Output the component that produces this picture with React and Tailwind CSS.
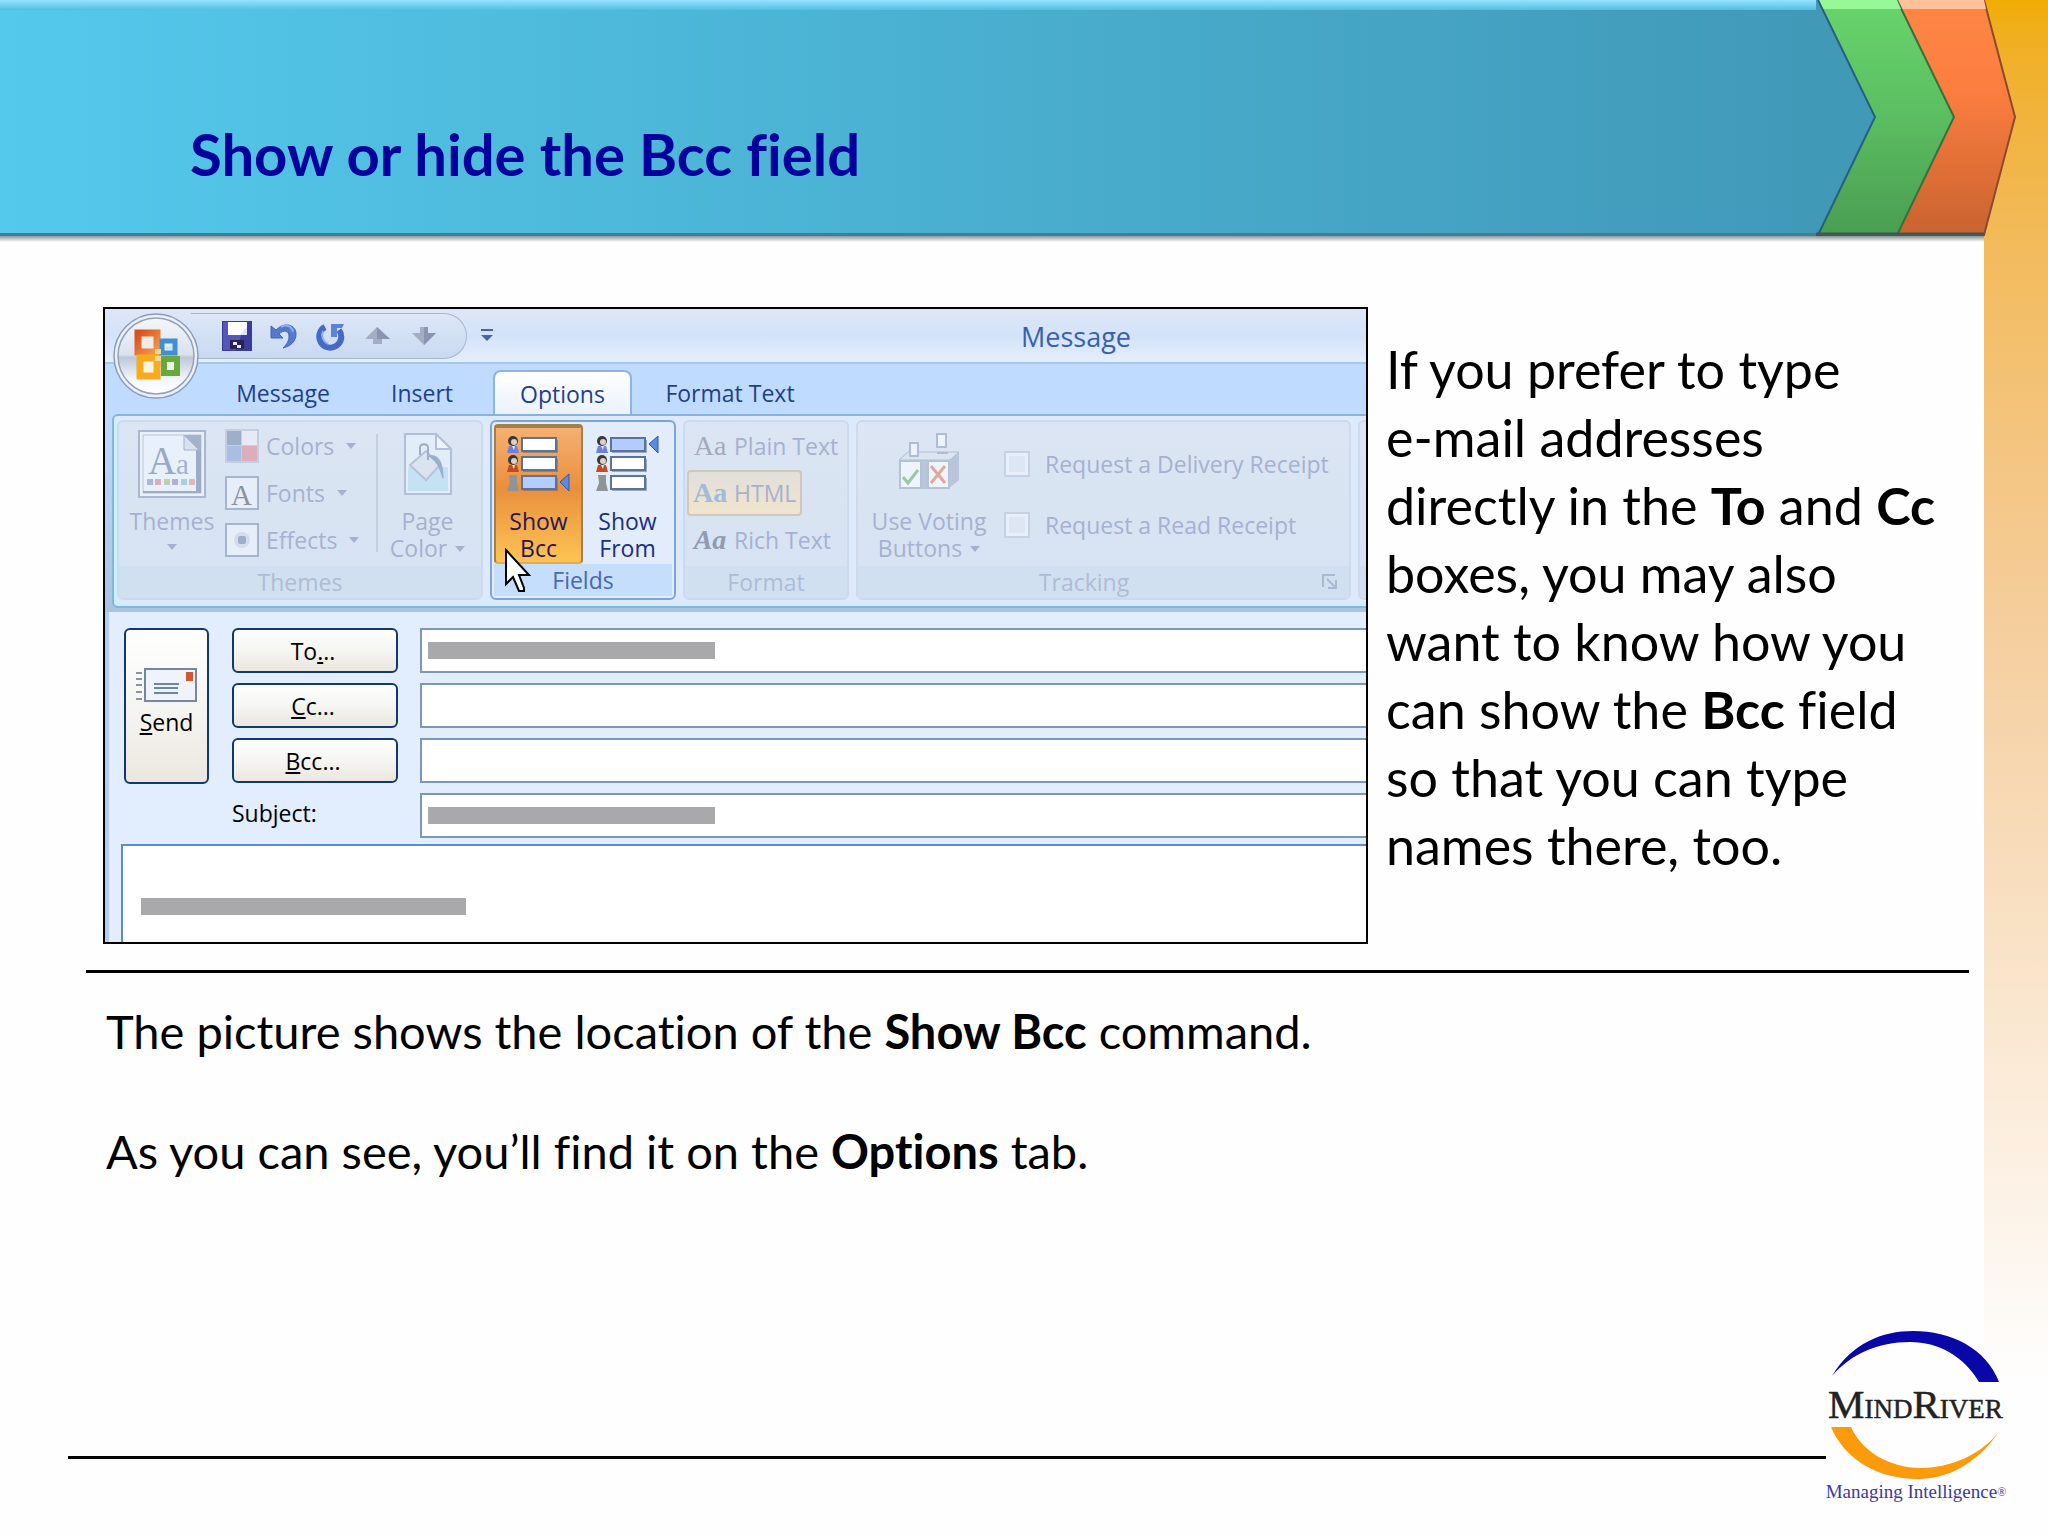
import React from 'react';
import clsx from 'clsx';

const Caret = ({ className }) => (
  <svg viewBox="0 0 10 6" className={clsx('w-[10px] h-[6px] shrink-0', className)}>
    <path d="M0 0H10L5 6Z" fill="currentColor" />
  </svg>
);

const HeaderArrows = () => (
  <svg viewBox="0 0 232 242" className="block w-[232px] h-[242px] shrink-0">
    <defs>
      <linearGradient id="green" x1="0" y1="0" x2="0" y2="1">
        <stop offset="0" stopColor="#68d56c" />
        <stop offset="0.5" stopColor="#5bbd61" />
        <stop offset="1" stopColor="#4a9d51" />
      </linearGradient>
      <linearGradient id="orange" x1="0" y1="0" x2="0" y2="1">
        <stop offset="0" stopColor="#ff8744" />
        <stop offset="0.4" stopColor="#fb7d3f" />
        <stop offset="1" stopColor="#c8632f" />
      </linearGradient>
      <linearGradient id="drop" x1="0" y1="0" x2="0" y2="1">
        <stop offset="0" stopColor="#5f6b70" />
        <stop offset="1" stopColor="#ffffff" />
      </linearGradient>
    </defs>
    <rect x="0" y="234" width="168" height="8" fill="url(#drop)" />
    <path d="M80 0H168L199 117L168 235H80Z" fill="url(#orange)" stroke="#8a4a30" strokeWidth="2" />
    <path d="M80 0H168L170 9H84Z" fill="#ffc19a" />
    <path d="M0 0H81L138 117L81 235H0Z" fill="url(#green)" stroke="#35713c" strokeWidth="2" />
    <path d="M2 0H81L85 9H2Z" fill="#97f898" />
    <path d="M-2 0H2L59 117L2 235H-2Z" fill="#4199b8" />
    <path d="M2 0L59 117L2 235" fill="none" stroke="#25607e" strokeWidth="2" />
    <path d="M0 234H168" stroke="#3d5a50" strokeWidth="3" />
  </svg>
);

const Header = () => (
  <header className="relative flex">
    <div className="flex-1 h-[242px] flex flex-col">
      <div className="h-[236px] border-b-[3px] border-[#3c7f97] bg-linear-to-r from-[#54c9ec] to-[#4199b8] flex flex-col">
        <div className="h-[10px] bg-linear-to-b from-[#93e3ff] to-[#54bfe0]" />
        <h1 className="pl-[190px] pt-[108px] text-[58px] leading-[72px] font-bold text-[#00009c]">
          Show or hide the Bcc field
        </h1>
      </div>
      <div className="h-[6px] bg-linear-to-b from-[#8d999e] to-white" />
    </div>
    <HeaderArrows />
  </header>
);

const OfficeOrb = () => (
  <svg viewBox="0 0 88 88" className="absolute left-[7px] top-[3px] w-[88px] h-[88px]">
    <defs>
      <linearGradient id="orb" x1="0" y1="0" x2="0" y2="1">
        <stop offset="0" stopColor="#f4f7fb" />
        <stop offset="0.48" stopColor="#dbe2ee" />
        <stop offset="0.52" stopColor="#bdc8da" />
        <stop offset="0.8" stopColor="#f3f6fb" />
        <stop offset="1" stopColor="#ffffff" />
      </linearGradient>
      <linearGradient id="orbRed" x1="0" y1="0" x2="1" y2="1">
        <stop offset="0" stopColor="#d9501c" />
        <stop offset="1" stopColor="#f59a4c" />
      </linearGradient>
    </defs>
    <circle cx="44" cy="44" r="42" fill="#eaf1fb" stroke="#8c9cb8" strokeWidth="1.5" />
    <circle cx="44" cy="44" r="38" fill="url(#orb)" stroke="#94a2bb" strokeWidth="1.5" />
    <rect x="26" y="21" width="19" height="19" fill="#f2ece8" stroke="url(#orbRed)" strokeWidth="7" />
    <rect x="50" y="29" width="13" height="12" fill="#e4eef8" stroke="#3f8fd2" strokeWidth="5" />
    <rect x="28" y="46" width="17" height="18" fill="#fbf4e2" stroke="#f8ab1c" strokeWidth="7" />
    <rect x="52" y="47" width="13" height="14" fill="#eef5e8" stroke="#69a83c" strokeWidth="6" />
    <path d="M43 37h6v5h-6zM43 44h6v5h-6z" fill="#f3d69a" />
    <path d="M54 36h6" stroke="#cfe3f6" strokeWidth="3" />
  </svg>
);

const QuickAccess = () => (
  <div className="h-[46px] ml-[86px] w-[276px] rounded-r-full border border-[#a5b5d2] border-l-0 bg-linear-to-b from-[#dde8f8] to-[#c9d9f0] flex items-center gap-[17px] pl-[31px]">
    <button type="button" aria-label="Save">
      <svg viewBox="0 0 30 30" className="block w-[30px] h-[30px]">
        <rect x="0.5" y="0.5" width="29" height="29" fill="#5456b8" stroke="#3a3a96" />
        <path d="M24 1H29V29H14Z" fill="#3c3c9c" />
        <path d="M6 1H25V14H6Z" fill="#ffffff" />
        <path d="M18 14L25 6V14Z" fill="#dfe3ee" />
        <rect x="8" y="19" width="14" height="9" fill="#25254f" />
        <path d="M11 21h4v3h-4zM15 24h4v3h-4z" fill="#e7e7f4" />
      </svg>
    </button>
    <button type="button" aria-label="Undo">
      <svg viewBox="0 0 30 30" className="block w-[30px] h-[30px]">
        <path d="M2 5L2 17L14 17L10 13C15 8 20 10 20 15C20 20 18 23 14 27C22 25 27 20 27 13C27 4 16 0 7 9Z" fill="#5479cf" stroke="#3f62b8" strokeWidth="1" />
        <path d="M12 6C17 3 23 5 24 11" fill="none" stroke="#8fb0ee" strokeWidth="2" />
      </svg>
    </button>
    <button type="button" aria-label="Redo">
      <svg viewBox="0 0 30 30" className="block w-[30px] h-[30px]">
        <path d="M9 6A11 11 0 1 0 23 9" fill="none" stroke="#4668c6" strokeWidth="6" />
        <path d="M7 10A10 10 0 0 0 12 23" fill="none" stroke="#8fb0ee" strokeWidth="2" />
        <path d="M15 3H28L26 7L21 7L21 16H15Z" fill="#5b84d8" />
      </svg>
    </button>
    <button type="button" aria-label="Previous item">
      <svg viewBox="0 0 30 30" className="block w-[30px] h-[30px]">
        <path d="M14 6L27 18H19V23H10V18H2Z" fill="#a3aec4" />
        <path d="M14 6L27 18H14Z" fill="#8995b0" />
      </svg>
    </button>
    <button type="button" aria-label="Next item">
      <svg viewBox="0 0 30 30" className="block w-[30px] h-[30px]">
        <path d="M10 6H18V12H26L14 24L2 12H10Z" fill="#a3aec4" />
        <path d="M14 24L26 12H18V6H14Z" fill="#8995b0" />
      </svg>
    </button>
  </div>
);

const TitleBar = () => (
  <div className="h-[55px] flex items-start pt-1 border-b-2 border-[#a3c8ee] bg-linear-to-b from-[#dce8f8] via-[#d3e3f8] to-[#e4effd]">
    <QuickAccess />
    <button type="button" aria-label="Customize toolbar" className="ml-[14px] mt-[16px] text-[#4a62a8]">
      <svg viewBox="0 0 12 13" className="block w-[12px] h-[13px]">
        <path d="M0 1H12" stroke="currentColor" strokeWidth="2" />
        <path d="M0 6H12L6 12Z" fill="currentColor" />
      </svg>
    </button>
    <p className="flex-1 pl-[528px] pt-[6px] text-[27px] leading-[36px] text-[#3a5fb0]">Message</p>
  </div>
);

const tabs = [
  { name: 'Message', className: 'ml-[110px] w-[136px]' },
  { name: 'Insert', className: 'w-[142px]' },
  { name: 'Options', className: 'w-[139px] rounded-t-lg border-2 border-b-0 border-[#8fb4e4] bg-linear-to-b from-white to-[#eaf2fc]' },
  { name: 'Format Text', className: 'w-[196px]' },
];

const Tabs = () => (
  <nav className="h-[50px] flex items-end bg-[#bfdbff]" role="tablist">
    {tabs.map((tab) => (
      <button
        key={tab.name}
        type="button"
        role="tab"
        aria-selected={tab.name === 'Options'}
        className={clsx('h-[44px] pt-[2px] text-[23px] leading-[36px] text-[#1f3f8c]', tab.className)}
      >
        {tab.name}
      </button>
    ))}
  </nav>
);

const Group = ({ title, className, children, launcher }) => (
  <section className={clsx('shrink-0 h-[180px] flex flex-col rounded-md border-2 border-[#ccdaeb] bg-linear-to-b from-[#dbe5f3] to-[#d6e3f2] text-[#a6b1d0]', className)}>
    <div className="flex-1 flex">{children}</div>
    <div className="h-[32px] flex items-center justify-center bg-[#d1e0f0] text-[#afbcd6]">
      <h2 className={clsx('text-[23px] leading-[32px]', launcher && 'flex-1 pr-[12px] text-center')}>{title}</h2>
      {launcher && (
        <svg viewBox="0 0 16 16" className="w-4 h-4 mr-[11px]">
          <path d="M1 13V1H13" fill="none" stroke="#a9b9d2" strokeWidth="2" />
          <path d="M5 5L13 13M14 6V14H6" fill="none" stroke="#a9b9d2" strokeWidth="2" />
        </svg>
      )}
    </div>
  </section>
);

const ThemesGroup = () => (
  <Group title="Themes" className="w-[366px]">
    <button type="button" className="w-[106px] pt-[8px] flex flex-col items-center text-[23px] leading-[28px]">
      <svg viewBox="0 0 68 68" className="w-[68px] h-[68px] mb-[9px]">
        <rect x="1" y="1" width="66" height="66" fill="#e9f0fa" stroke="#a9b8d0" strokeWidth="2" />
        <path d="M5 5H63V63H5Z" fill="#e7f0fb" stroke="#b8c6da" strokeWidth="1" />
        <path d="M58 18H63V63H5V61H58Z" fill="#9eadc6" />
        <path d="M46 5H63V20H46Z" fill="#a5b3ca" />
        <path d="M46 5V20H61Z" fill="#d7e1ef" stroke="#a5b3ca" />
        <text x="10" y="44" fontSize="39" fontFamily="Liberation Serif" fill="#98a9c6">A</text>
        <text x="38" y="44" fontSize="29" fontFamily="Liberation Serif" fill="#a3b2cb">a</text>
        <path d="M9 49h6v6h-6z" fill="#b0b4dc" />
        <path d="M17 49h6v6h-6z" fill="#d7afbf" />
        <path d="M26 49h6v6h-6z" fill="#bfd0b0" />
        <path d="M34 49h6v6h-6z" fill="#b4b2d4" />
        <path d="M43 49h6v6h-6z" fill="#a7d0e2" />
        <path d="M51 49h6v6h-6z" fill="#e2b4c0" />
      </svg>
      Themes
      <Caret className="mt-[9px]" />
    </button>
    <div className="pt-[7px] w-[142px] flex flex-col gap-[13px] text-[23px] leading-[34px]">
      <button type="button" className="flex items-center gap-[7px]">
        <svg viewBox="0 0 34 34" className="w-[34px] h-[34px]">
          <path d="M0 0H34V34H0Z" fill="#c3cfe0" />
          <path d="M2 2H16V16H2Z" fill="#9fafca" />
          <path d="M17 2H32V16H17Z" fill="#e6ebf3" />
          <path d="M2 17H16V32H2Z" fill="#a9bfe2" />
          <path d="M17 17H32V32H17Z" fill="#dcaebb" />
        </svg>
        Colors
        <Caret className="ml-[5px]" />
      </button>
      <button type="button" className="flex items-center gap-[7px]">
        <svg viewBox="0 0 34 34" className="w-[34px] h-[34px]">
          <rect x="1" y="1" width="32" height="32" fill="#e6eef9" stroke="#a5b5cf" strokeWidth="2" />
          <text x="6" y="29" fontSize="29" fontFamily="Liberation Serif" fill="#8d9199">A</text>
        </svg>
        Fonts
        <Caret className="ml-[5px]" />
      </button>
      <button type="button" className="flex items-center gap-[7px]">
        <svg viewBox="0 0 34 34" className="w-[34px] h-[34px]">
          <rect x="1" y="1" width="32" height="32" fill="#e6eef9" stroke="#a5b5cf" strokeWidth="2" />
          <circle cx="17" cy="17" r="8" fill="#d3ddec" />
          <rect x="13" y="13" width="8" height="8" rx="2" fill="#9dadca" />
        </svg>
        Effects
        <Caret className="ml-[5px]" />
      </button>
    </div>
    <div className="mt-3 w-[2px] h-[118px] ml-[9px] bg-[#c3d0e2]" />
    <button type="button" className="flex-1 pt-[11px] pr-1 flex flex-col items-center text-[23px] leading-[27px]">
      <svg viewBox="0 0 48 62" className="w-[48px] h-[62px] mb-[13px]">
        <path d="M1 1H32L47 16V61H1Z" fill="#e3edf9" stroke="#b1c0d8" strokeWidth="2" />
        <path d="M4 34H44V58H4Z" fill="#c5e2f4" />
        <path d="M32 1V16H47Z" fill="#eef4fb" stroke="#b1c0d8" strokeWidth="2" />
        <path d="M6 32L22 18L36 32L22 47Z" fill="#dbe3f0" stroke="#b5c2d7" strokeWidth="2" />
        <path d="M16 22V15C16 10 24 10 24 15V27" fill="none" stroke="#9fadc6" strokeWidth="2" />
        <path d="M25 23C33 21 39 27 39 45C36 38 36 31 25 23Z" fill="#9daec9" stroke="#9daec9" strokeWidth="1" />
      </svg>
      <span>Page</span>
      <span className="flex items-center gap-2">Color <Caret /></span>
    </button>
  </Group>
);

// Three address rows, the highlighted one carries the blue marker.
const FieldRows = ({ active }) => (
  <svg viewBox="0 0 64 58" className="w-[64px] h-[58px]">
    {[0, 1, 2].map((row) => {
      const y = row * 19 + 2;
      return (
        <g key={row}>
          {row === 2 ? (
            <path d={`M2 ${y}H10V${y + 8}L12 ${y + 16}H0L3 ${y + 8}Z`} fill="#8f9499" />
          ) : (
            <>
              <circle cx="6" cy={y + 4} r="5" fill="#39393d" />
              <circle cx="7" cy={y + 5} r="3" fill="#d9d2cb" />
              <path d={`M0 ${y + 16}L2 ${y + 9}H10L12 ${y + 16}Z`} fill={row === 0 ? '#6f7fe0' : '#c24a1e'} />
              <path d={`M5 ${y + 9}H8L7 ${y + 13}Z`} fill="#ece6e2" />
            </>
          )}
          <rect x="16" y={y + 3} width="35" height="13" fill="#56617c" opacity="0.5" />
          <rect x="15" y={y + 1} width="34" height="13" fill={row === active ? '#b4ccff' : '#ffffff'} stroke="#5a7399" strokeWidth="2" />
          {row === active && <path d={`M62 ${y - 1}V${y + 16}L53 ${y + 7}Z`} fill="#5b8ae0" stroke="#2e55b4" />}
        </g>
      );
    })}
  </svg>
);

const Cursor = () => (
  <svg viewBox="0 0 28 48" className="absolute left-[12px] top-[126px] w-[28px] h-[48px]">
    <path d="M2 2V36L9 29L15 43H20V40L15 27H25Z" fill="#ffffff" stroke="#000000" strokeWidth="2" />
  </svg>
);

const FieldsGroup = () => (
  <section className="relative shrink-0 w-[186px] h-[180px] flex flex-col rounded-md border-2 border-[#7fa6d8] bg-[#e2ecfa] p-[2px] text-[#1c2f80]">
    <div className="flex-1 flex text-[23px] leading-[27px]">
      <button type="button" className="w-[89px] pt-[7px] flex flex-col items-center rounded-sm border-2 border-t-4 border-[#a08050] border-b-[#e8a850] bg-linear-to-b from-[#f6b070] via-[#e98f3c] via-45% to-[#fcc454] text-[#2a1458]">
        <FieldRows active={2} />
        <span className="mt-[15px]">Show</span>
        <span>Bcc</span>
      </button>
      <button type="button" className="flex-1 pt-[11px] flex flex-col items-center">
        <FieldRows active={0} />
        <span className="mt-[15px]">Show</span>
        <span>From</span>
      </button>
    </div>
    <h2 className="h-[32px] bg-[#c4defc] text-center text-[23px] leading-[32px] text-[#4868b0]">Fields</h2>
    <Cursor />
  </section>
);

const formats = [
  { name: 'Plain Text', glyph: 'text-[#a3abbc]', className: 'border-transparent' },
  { name: 'HTML', glyph: 'font-bold text-[#a0bbdc]', className: 'border-[#cfc8bb] bg-linear-to-b from-[#e2e0dc] to-[#f0e4cc]' },
  { name: 'Rich Text', glyph: 'font-bold italic text-[#8f9bb0]', className: 'border-transparent' },
];

const FormatGroup = () => (
  <Group title="Format" className="w-[166px]">
    <div className="pt-[1px] pl-[2px] flex flex-col items-start gap-[1px]">
      {formats.map((format) => (
        <button
          key={format.name}
          type="button"
          className={clsx('h-[46px] pl-1 pr-1 flex items-center gap-[7px] rounded-sm border-2 whitespace-nowrap text-[23px]', format.className)}
        >
          <span className={clsx('w-[34px] font-["Liberation_Serif",serif] text-[28px]', format.glyph)}>Aa</span>
          {format.name}
        </button>
      ))}
    </div>
  </Group>
);

const ReceiptOption = ({ id, children }) => (
  <div className="flex items-center gap-[15px]">
    <input id={id} type="checkbox" className="appearance-none w-[26px] h-[26px] border-2 border-[#c5d2e4] bg-[#dde7f4] shadow-[inset_0_0_0_3px_#e8eff9]" />
    <label htmlFor={id} className="text-[23px] leading-[30px] whitespace-nowrap">{children}</label>
  </div>
);

const TrackingGroup = () => (
  <Group title="Tracking" className="w-[495px]" launcher>
    <button type="button" className="w-[146px] pt-[11px] pr-1 flex flex-col items-center text-[23px] leading-[27px]">
      <svg viewBox="0 0 62 58" className="w-[62px] h-[58px] mb-[17px]">
        <path d="M1 27L10 19H61V47L50 56H1Z" fill="#b9c6d9" />
        <path d="M1 27L10 19H61L52 27Z" fill="#dbe4f0" stroke="#b0bed2" />
        <path d="M2 28H23V55H2ZM30 28H51V55H30Z" fill="#eef4fb" stroke="#b4c2d6" strokeWidth="2" />
        <path d="M12 10H20V23H12ZM39 1H48V14H39ZM39 20H50" fill="#edf3fb" stroke="#aebdd2" strokeWidth="2" />
        <path d="M5 44L10 50L20 37" fill="none" stroke="#9cc8a4" strokeWidth="3" />
        <path d="M33 33L47 50M47 33L33 50" fill="none" stroke="#e3a79c" strokeWidth="3" />
      </svg>
      <span className="whitespace-nowrap">Use Voting</span>
      <span className="flex items-center gap-2">Buttons <Caret /></span>
    </button>
    <div className="pt-[27px] flex flex-col gap-[31px]">
      <ReceiptOption id="delivery">Request a Delivery Receipt</ReceiptOption>
      <ReceiptOption id="read">Request a Read Receipt</ReceiptOption>
    </div>
  </Group>
);

const Ribbon = () => (
  <div className="h-[194px] ml-[7px] rounded-l-md border-2 border-r-0 border-[#8db2d8] bg-[#dceafb] shadow-[inset_3px_-3px_0_#c8f0ff] overflow-hidden">
    <div className="flex gap-[7px] pt-[4px] pl-[3px]">
      <ThemesGroup />
      <FieldsGroup />
      <FormatGroup />
      <TrackingGroup />
      <Group title="" className="w-[60px]" />
    </div>
  </div>
);

const buttonStyle = 'rounded-md border-2 border-[#12386f] bg-linear-to-b from-white via-[#f5f5f2] to-[#ebe7df] text-black';

const fields = [
  { id: 'to', label: <>To<u>.</u>..</>, filled: true },
  { id: 'cc', label: <><u>C</u>c...</> },
  { id: 'bcc', label: <><u>B</u>cc...</> },
];

const AddressField = ({ id, filled, label }) => (
  <div className="flex-1 h-[45px] pl-[6px] flex items-center border-2 border-r-0 border-[#7c98b8] bg-white">
    {filled && <span className="w-[287px] h-[17px] bg-[#a9a9ab]" />}
    <input id={id} type="text" aria-label={label} className="flex-1 min-w-0 h-full outline-none" />
  </div>
);

const MessageForm = () => (
  <form className="ml-1 bg-[#e2eefe] pt-4">
    <div className="flex pl-[15px]">
      <button type="button" className={clsx('w-[85px] h-[156px] pb-2 flex flex-col items-center justify-center text-[23px] leading-[30px]', buttonStyle)}>
        <svg viewBox="0 0 62 36" className="w-[62px] h-[36px] mb-1">
          <path d="M0 6H6M0 12H6M0 18H6M0 25H6M0 32H6" stroke="#8e93a3" strokeWidth="2" />
          <rect x="9" y="2" width="51" height="32" fill="#eef3fc" stroke="#76879f" strokeWidth="2" />
          <rect x="50" y="5" width="7" height="9" fill="#d5562c" />
          <path d="M18 17H43M18 21H42M18 26H42" stroke="#6b87a8" strokeWidth="2" />
        </svg>
        <span><u>S</u>end</span>
      </button>
      <div className="flex-1 ml-[23px] flex flex-col gap-[10px]">
        {fields.map((field) => (
          <div key={field.id} className="flex gap-[22px]">
            <button type="button" className={clsx('w-[166px] h-[45px] pr-1 text-[23px] leading-[36px]', buttonStyle)}>{field.label}</button>
            <AddressField id={field.id} filled={field.filled} label={field.id} />
          </div>
        ))}
        <div className="flex gap-[22px]">
          <label htmlFor="subject" className="w-[166px] text-[23px] leading-[40px] text-black">Subject:</label>
          <AddressField id="subject" label="Subject" filled />
        </div>
      </div>
    </div>
    <div className="mt-[6px] ml-3 h-[98px] pt-[52px] pl-[18px] flex flex-col border-l-2 border-t-2 border-[#5f8bc9] bg-white">
      <span className="w-[325px] h-[17px] shrink-0 bg-[#a9a9ab]" />
      <textarea aria-label="Message body" className="flex-1 min-h-0 resize-none outline-none" />
    </div>
  </form>
);

const OutlookWindow = () => (
  <div className='relative flex-1 min-w-0 border-2 border-black bg-[#b4cdf0] font-["Open_Sans",sans-serif] overflow-hidden'>
    <TitleBar />
    <Tabs />
    <div className="bg-linear-to-b from-[#bfdbff] to-[#a9c3e0] pb-[4px]">
      <Ribbon />
    </div>
    <MessageForm />
    <OfficeOrb />
  </div>
);

const Logo = () => (
  <div className="w-[180px] flex flex-col items-center">
    <svg viewBox="0 0 180 152" className="w-[180px] h-[152px]">
      <path d="M6 48C26 15 56 3 87 3C125 3 160 20 173 54H153C138 28 112 14 84 14C52 14 25 26 6 48Z" fill="#0a07a8" />
      <path d="M5 99H25C35 122 62 140 95 140C125 140 155 126 172 105C150 137 120 151 92 151C50 151 18 130 5 99Z" fill="#fb9a0b" />
      <text x="2" y="90" fontFamily="Liberation Serif" fontSize="27" fill="#222222" stroke="#222222" strokeWidth="0.5">
        <tspan fontSize="41">M</tspan>IND<tspan fontSize="41">R</tspan>IVER
      </text>
    </svg>
    <p className='font-["Liberation_Serif",serif] text-[19px] leading-[24px] whitespace-nowrap text-[#3a3a9c]'>
      Managing Intelligence<span className="text-[12px] align-top">®</span>
    </p>
  </div>
);

const App = () => (
  <div className='relative min-h-screen flex flex-col bg-[#fefefe] font-["Lato",sans-serif] [font-variant-ligatures:none] text-black'>
    <div className="absolute right-0 inset-y-0 w-16 bg-linear-to-b from-[#f0ad00] via-[#f5cfa0] via-42% to-[#fefefe] to-90%" />
    <Header />
    <main className="relative mr-16 flex-1">
      <div className="flex pl-[103px] pt-[65px]">
        <OutlookWindow />
        <p className="w-[616px] pl-[18px] pt-[28px] text-[52px] leading-[68px]">
          If you prefer to type<br />
          e-mail addresses<br />
          directly in the <b>To</b> and <b>Cc</b><br />
          boxes, you may also<br />
          want to know how you<br />
          can show the <b>Bcc</b> field<br />
          so that you can type<br />
          names there, too.
        </p>
      </div>
      <hr className="mt-[26px] ml-[86px] mr-[15px] border-0 h-[3px] bg-black" />
      <div className="pl-[106px] pt-[28px] text-[47px] leading-[60px]">
        <p>The picture shows the location of the <b>Show Bcc</b> command.</p>
        <p className="mt-[60px]">As you can see, you’ll find it on the <b>Options</b> tab.</p>
      </div>
    </main>
    <footer className="relative flex items-end pl-[68px] pr-[42px] pb-[32px]">
      <hr className="flex-1 mb-[45px] border-0 h-[3px] bg-black" />
      <Logo />
    </footer>
  </div>
);

export default App;
